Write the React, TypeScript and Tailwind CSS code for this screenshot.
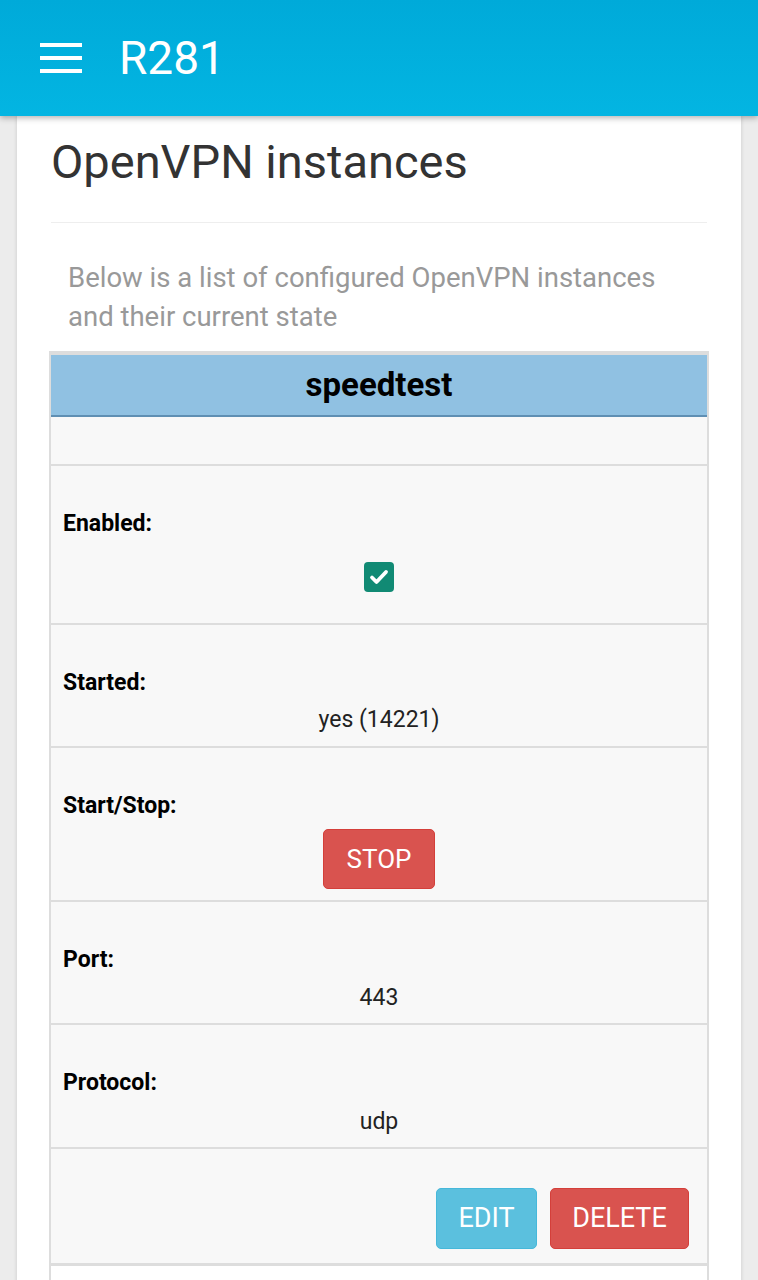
import React from 'react'

const font = { fontFamily: 'Roboto, "Noto Sans", sans-serif' }

const Row = ({ label, children, className }: { label: string; children: React.ReactNode; className?: string }) => (
  <div className={`border-b-2 border-[#dddddd] bg-[#f8f8f8] px-3 pt-[40px] ${className ?? ''}`}>
    <div className="text-[23px] leading-[36px] font-bold text-black">{label}</div>
    {children}
  </div>
)

const App = () => {
  return (
    <div className="min-h-[1280px] bg-[#ececec]" style={font}>
      <header className="relative z-10 flex h-[116px] items-center bg-gradient-to-b from-[#00aad9] to-[#03b5e2] shadow-[0_2px_6px_rgba(0,0,0,0.3)]">
        <div className="ml-[40px] flex w-[42px] flex-col gap-[9px]">
          <span className="block h-[4px] bg-white" />
          <span className="block h-[4px] bg-white" />
          <span className="block h-[4px] bg-white" />
        </div>
        <h1 className="ml-[37px] text-[46px] leading-none font-normal text-white">R281</h1>
      </header>

      <main className="mx-[17px] bg-white px-8 shadow-[0_0_4px_rgba(0,0,0,0.15)]">
        <h2 className="ml-[2px] pt-[20px] pb-[34px] text-[47px] leading-[52px] font-normal text-[#333333]">
          OpenVPN instances
        </h2>
        <div className="mx-[2px] border-t border-[#eeeeee]" />
        <p className="px-[19px] pt-[35px] text-[27.5px] leading-[39px] text-[#999999]">
          Below is a list of configured OpenVPN instances and their current state
        </p>

        <div className="mt-[15px] border-x-2 border-t-4 border-[#dddddd]">
          <div className="flex h-[62px] items-center justify-center border-b-2 border-[#5f8fb3] bg-[#90c1e2]">
            <span className="text-[33px] font-bold text-black">speedtest</span>
          </div>
          <div className="h-[49px] border-b-2 border-[#dddddd] bg-[#f8f8f8]" />

          <Row label="Enabled:" className="h-[159px]">
            <div className="mt-[20px] flex justify-center">
              <span className="flex h-[30px] w-[30px] items-center justify-center rounded-[4px] bg-[#118a74]">
                <svg width="24" height="24" viewBox="0 0 24 24" fill="none" stroke="white" strokeWidth="3.8" strokeLinecap="round" strokeLinejoin="round">
                  <path d="M5 12.5l4.5 4.5L19 7" />
                </svg>
              </span>
            </div>
          </Row>

          <Row label="Started:" className="h-[123px]">
            <div className="text-center text-[23px] leading-[38px] text-[#222222]">yes (14221)</div>
          </Row>

          <Row label="Start/Stop:" className="h-[154px]">
            <div className="mt-[5px] flex justify-center">
              <button className="h-[60px] w-[112px] rounded-[5px] border border-[#d43f3a] bg-[#d9534f] text-[26px] text-white">
                STOP
              </button>
            </div>
          </Row>

          <Row label="Port:" className="h-[123px]">
            <div className="text-center text-[23px] leading-[40px] text-[#222222]">443</div>
          </Row>

          <Row label="Protocol:" className="h-[124px]">
            <div className="text-center text-[23px] leading-[42px] text-[#222222]">udp</div>
          </Row>

          <div className="flex h-[117px] items-center justify-end gap-[13px] border-b-[3px] border-[#dddddd] bg-[#f8f8f8] pt-[24px] pr-[18px]">
            <button className="h-[61px] w-[101px] rounded-[5px] border border-[#46b8da] bg-[#5bc0de] text-[27px] text-white">
              EDIT
            </button>
            <button className="h-[61px] w-[139px] rounded-[5px] border border-[#d43f3a] bg-[#d9534f] text-[27px] text-white">
              DELETE
            </button>
          </div>
          <div className="h-[20px] bg-white" />
        </div>
      </main>
    </div>
  )
}

export default App
